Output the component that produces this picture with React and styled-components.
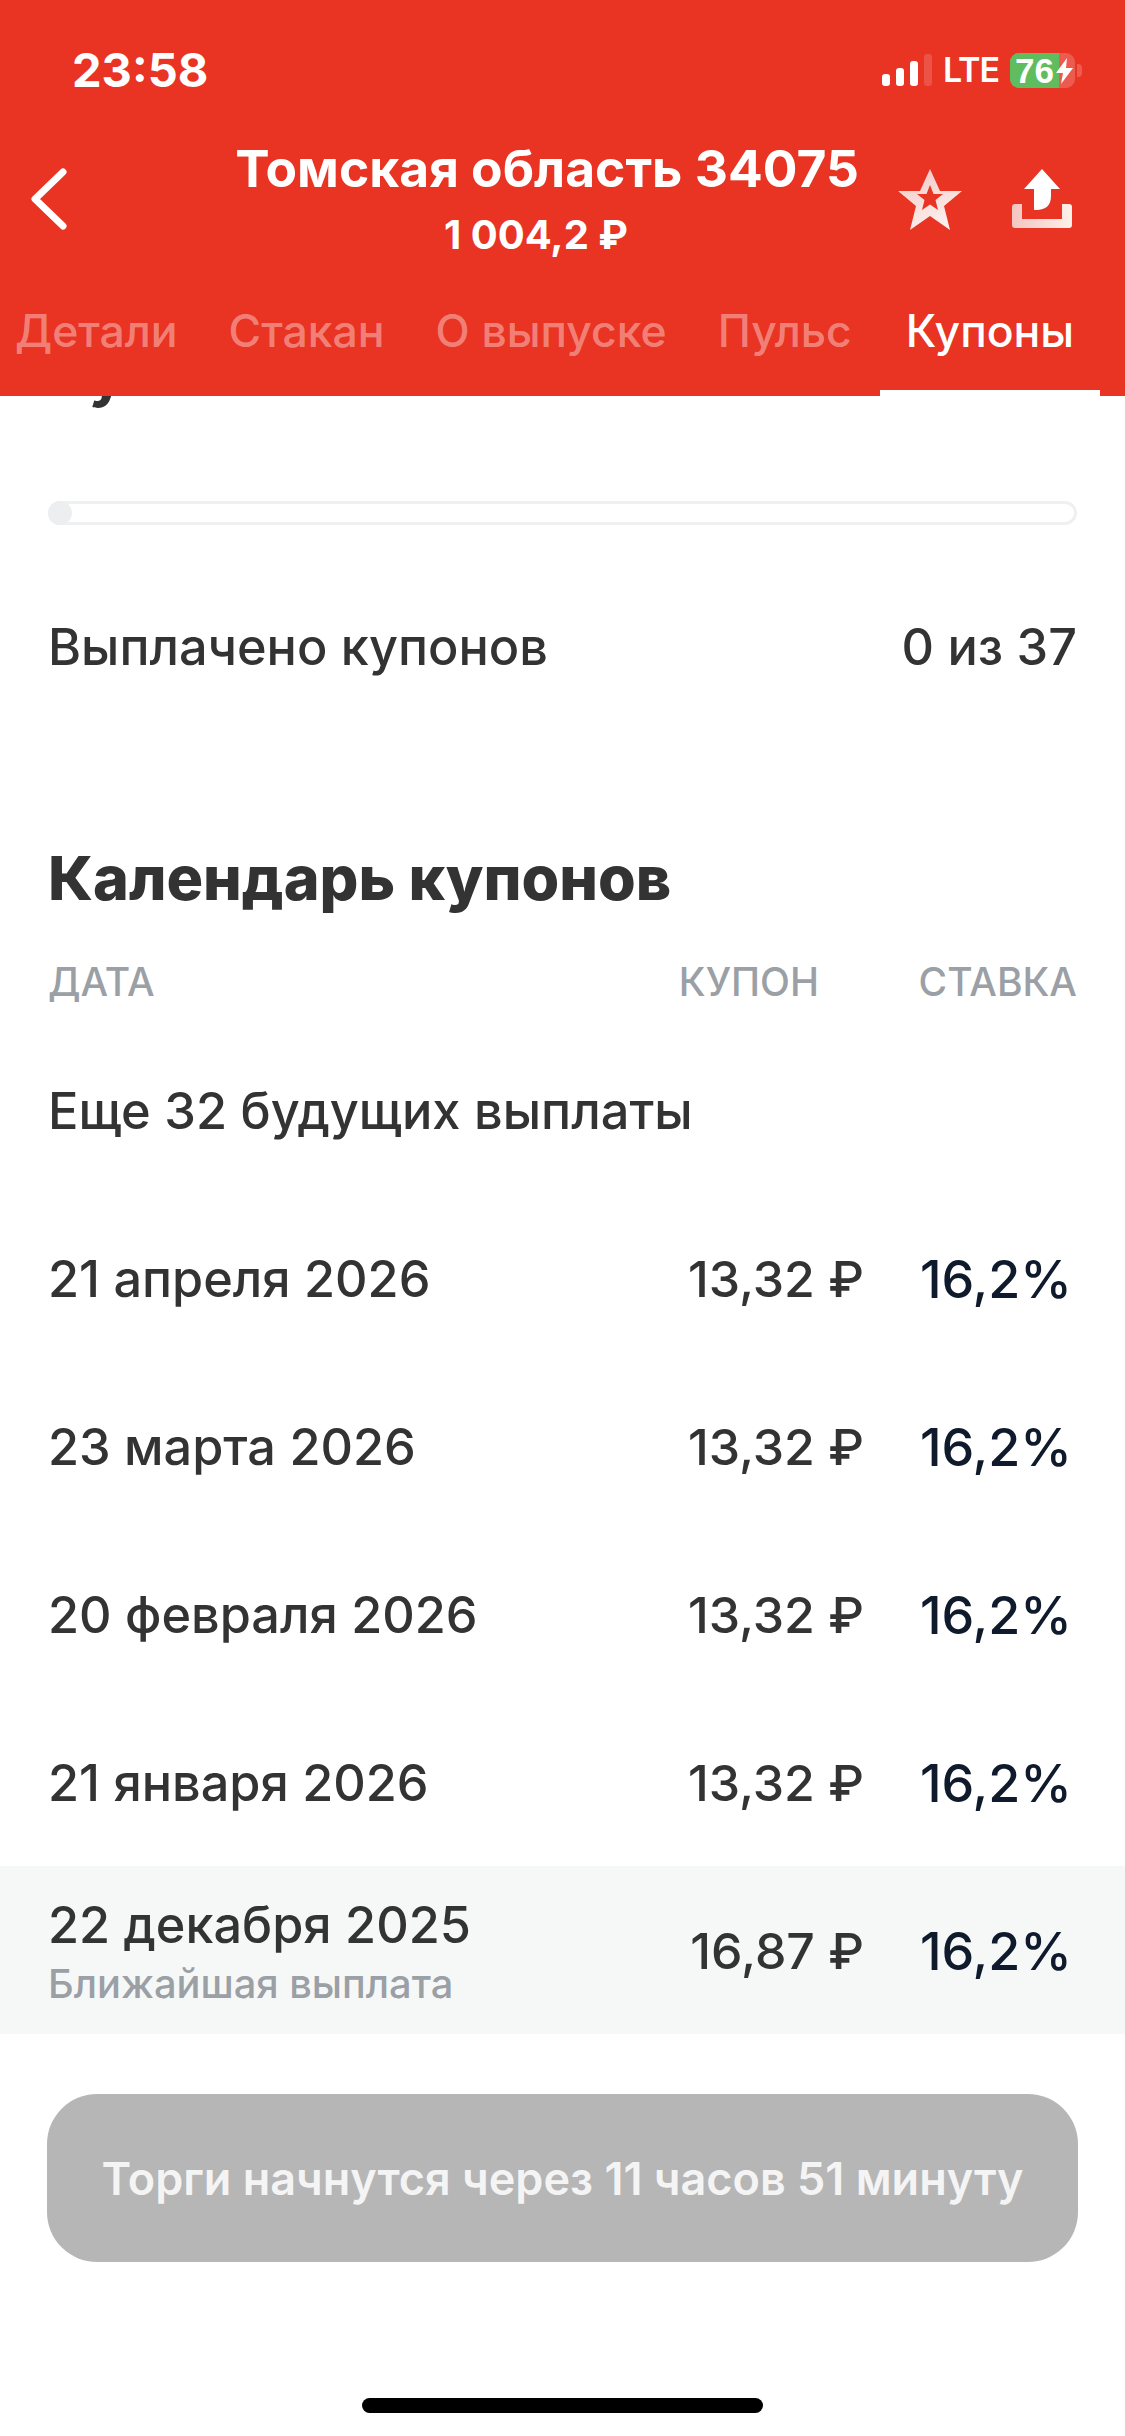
import React from 'react';
import styled, { createGlobalStyle } from 'styled-components';

const GlobalStyle = createGlobalStyle`
  html, body { margin: 0; padding: 0; background: #fff; }
  body { font-family: Inter, "Noto Sans", sans-serif; }
  * { box-sizing: border-box; }
`;

const Page = styled.div`
  width: 1125px;
  height: 2436px;
  display: flex;
  flex-direction: column;
  overflow: hidden;
  background: #fff;
`;

const Header = styled.header`
  height: 396px;
  background: #e93323;
  color: #fff;
  display: flex;
  flex-direction: column;
  flex-shrink: 0;
  position: relative;
`;

const StatusBar = styled.div`
  height: 132px;
  padding: 46px 43px 0 72px;
  display: flex;
  justify-content: space-between;
  align-items: flex-start;
`;

const Clock = styled.span`
  font-size: 47px;
  line-height: 48px;
  font-weight: 700;
`;

const StatusRight = styled.div`
  display: flex;
  align-items: center;
  gap: 11px;
  height: 48px;
`;

const Signal = styled.div`
  display: flex;
  align-items: flex-end;
  gap: 6px;
  height: 32px;
`;

const SignalBar = styled.span`
  width: 8px;
  height: ${p => p.$h}px;
  border-radius: 3px;
  background: ${p => (p.$off ? 'rgba(255,255,255,0.16)' : '#fff')};
`;

const Lte = styled.span`
  font-size: 34px;
  font-weight: 600;
  line-height: 36px;
  letter-spacing: -1px;
`;

const Battery = styled.div`
  position: relative;
  width: 65px;
  height: 35px;
  border-radius: 9px;
  background: rgba(255,255,255,0.2);
  font-family: "Liberation Sans", Arial, sans-serif;
  font-size: 35px;
  font-weight: 700;
  line-height: 35px;
  padding-left: 5px;
`;

const BatteryFill = styled.span`
  position: absolute;
  left: 0;
  top: 0;
  bottom: 0;
  width: ${p => p.$level}%;
  border-radius: 9px 0 0 9px;
  background: #5fbd5f;
`;

const BatteryText = styled.span`
  position: relative;
`;

const BatteryCap = styled.span`
  width: 5px;
  height: 13px;
  margin-left: -9px;
  border-radius: 0 4px 4px 0;
  background: rgba(255,255,255,0.2);
`;

const BoltSlot = styled.span`
  position: absolute;
  right: 2px;
  top: 5px;
  display: flex;
`;

const NavRow = styled.div`
  height: 134px;
  display: flex;
  align-items: center;
  padding: 0 53px 0 28px;
`;

const IconSlot = styled.div`
  display: flex;
  align-items: center;
  flex-shrink: 0;
`;

const TitleBlock = styled.div`
  flex: 1;
  text-align: center;
  padding-left: 128px;
`;

const Title = styled.div`
  font-size: 51.5px;
  line-height: 60px;
  font-weight: 700;
  white-space: nowrap;
`;

const Price = styled.div`
  margin-top: 12px;
  padding-right: 22px;
  font-size: 40px;
  line-height: 50px;
  font-weight: 700;
`;

const Actions = styled.div`
  display: flex;
  align-items: center;
  gap: 50px;
`;

const Tabs = styled.nav`
  flex: 1;
  display: flex;
  align-items: stretch;
  gap: 51px;
  padding: 0 0 0 15px;
`;

const Tab = styled.div`
  font-size: 44.5px;
  font-weight: 500;
  line-height: 50px;
  padding: 40px 0 0;
  margin-left: ${p => (p.$active ? '3px' : '0')};
  white-space: nowrap;
  color: ${p => (p.$active ? '#fff' : 'rgba(255,255,255,0.4)')};
  position: relative;
  &::after {
    content: '';
    display: ${p => (p.$active ? 'block' : 'none')};
    position: absolute;
    left: -26px;
    right: -26px;
    bottom: 0;
    height: 6px;
    background: #fff;
  }
`;

const Content = styled.main`
  flex: 1;
  display: flex;
  flex-direction: column;
  min-height: 0;
`;

const ClippedHeading = styled.div`
  height: 105px;
  padding-left: 48px;
  overflow: hidden;
  flex-shrink: 0;
`;

const ClippedText = styled.div`
  font-size: 60px;
  line-height: 60px;
  font-weight: 700;
  color: #333;
  margin-top: -53px;
`;

const Progress = styled.div`
  margin: 0 48px;
  height: 24px;
  box-shadow: inset 0 0 0 3px #eff1f1;
  border-radius: 12px;
  flex-shrink: 0;
`;

const ProgressFill = styled.div`
  width: 24px;
  height: 24px;
  background: #eceeef;
  border-radius: 50%;
`;

const PaidRow = styled.div`
  display: flex;
  justify-content: space-between;
  padding: 0 48px;
  margin-top: 94px;
  font-size: 50.4px;
  line-height: 56px;
  font-weight: 500;
  color: #333;
`;

const SectionTitle = styled.h2`
  margin: 171px 0 0;
  padding: 0 48px;
  font-size: 61px;
  line-height: 64px;
  font-weight: 800;
  color: #333;
`;

const ColumnsHead = styled.div`
  display: grid;
  grid-template-columns: 1fr 190px 258px;
  padding: 0 48px;
  margin-top: 49px;
  font-size: 39px;
  line-height: 46px;
  font-weight: 500;
  color: #9b9fa6;
`;

const HeadRight = styled.div`
  text-align: right;
`;

const MoreRow = styled.div`
  padding: 0 48px;
  margin-top: 78px;
  font-size: 50.5px;
  line-height: 56px;
  font-weight: 500;
  color: #333;
`;

const Rows = styled.div`
  margin-top: 55px;
`;

const Row = styled.div`
  height: 168px;
  display: grid;
  grid-template-columns: 1fr 222px 213px;
  align-items: center;
  padding: 2px 48px 0;
  background: ${p => (p.$near ? '#f6f8f7' : 'transparent')};
`;

const DateCol = styled.div`
  display: flex;
  flex-direction: column;
  padding-top: ${p => (p.$near ? '4px' : '0')};
`;

const DateText = styled.span`
  font-size: 50.4px;
  line-height: ${p => (p.$near ? '62px' : '58px')};
  font-weight: 500;
  color: #333;
`;

const NearText = styled.span`
  font-size: 39.8px;
  line-height: 56px;
  font-weight: 500;
  color: #9b9fa6;
`;

const Coupon = styled.div`
  font-size: 50px;
  font-weight: 500;
  color: #333;
  white-space: nowrap;
  text-align: right;
`;

const Rate = styled.div`
  font-size: 52px;
  font-weight: 500;
  color: #0f1a2c;
  text-align: right;
  padding-right: 5px;
`;

const TradeButton = styled.div`
  margin: 60px 47px 0;
  height: 168px;
  border-radius: 50px;
  background: #b6b6b6;
  color: #f4f4f4;
  display: flex;
  align-items: center;
  justify-content: center;
  font-size: 45px;
  font-weight: 600;
`;

const HomeSlot = styled.div`
  margin-top: 136px;
  display: flex;
  justify-content: center;
`;

const HomeBar = styled.div`
  width: 401px;
  height: 15px;
  border-radius: 8px;
  background: #000;
`;

const BackIcon = () => (
  <svg width="40" height="64" viewBox="0 0 40 64">
    <path d="M35 5 L7 32 L35 59" fill="none" stroke="#fff" strokeWidth="7" strokeLinecap="round" strokeLinejoin="round" />
  </svg>
);

const StarIcon = () => (
  <svg width="64" height="61" viewBox="0 0 64 61">
    <defs>
      <linearGradient id="starFill" x1="0" y1="0" x2="0.4" y2="1">
        <stop offset="0" stopColor="#f3c6c2" />
        <stop offset="1" stopColor="#fbeeec" />
      </linearGradient>
    </defs>
    <path
      fillRule="evenodd"
      d="M32 0 L42 22 L64 22 L46 37 L52 61 L32 47 L12 61 L18 37 L0 22 L22 22 Z M32 16 L28.5 25 L19 25 L26.5 31 L24 41 L32 35.5 L40 41 L37.5 31 L45 25 L35.5 25 Z"
      fill="url(#starFill)"
    />
  </svg>
);

const ShareIcon = () => (
  <svg width="60" height="60" viewBox="0 0 60 60">
    <defs>
      <linearGradient id="trayFill" x1="0" y1="0" x2="1" y2="0">
        <stop offset="0" stopColor="#f4c5c1" />
        <stop offset="1" stopColor="#fdf0e8" />
      </linearGradient>
    </defs>
    <path d="M30 0 L48 20 L39 20 L39 27 C39 36 34 41 24 41 L22 41 L22 20 L12 20 Z" fill="#fff" />
    <path d="M0 38 Q0 35 3 35 L10 35 L10 50 L50 50 L50 35 L57 35 Q60 35 60 38 L60 56 Q60 59 57 59 L3 59 Q0 59 0 56 Z" fill="url(#trayFill)" />
  </svg>
);

const BoltIcon = () => (
  <svg width="17" height="26" viewBox="0 0 17 26">
    <path d="M11 0 L0 15 L7 15 L5 26 L17 10 L10 10 Z" fill="#fff" />
  </svg>
);

const rows = [
  ['21 апреля 2026', '13,32 ₽'],
  ['23 марта 2026', '13,32 ₽'],
  ['20 февраля 2026', '13,32 ₽'],
  ['21 января 2026', '13,32 ₽'],
];

export default function App() {
  return (
    <Page>
      <GlobalStyle />
      <Header>
        <StatusBar>
          <Clock>23:58</Clock>
          <StatusRight>
            <Signal>
              <SignalBar $h={12} />
              <SignalBar $h={18} />
              <SignalBar $h={25} />
              <SignalBar $h={32} $off />
            </Signal>
            <Lte>LTE</Lte>
            <Battery>
              <BatteryFill $level={76} />
              <BatteryText>76</BatteryText>
              <BoltSlot><BoltIcon /></BoltSlot>
            </Battery>
            <BatteryCap />
          </StatusRight>
        </StatusBar>
        <NavRow>
          <IconSlot><BackIcon /></IconSlot>
          <TitleBlock>
            <Title>Томская область 34075</Title>
            <Price>1 004,2 ₽</Price>
          </TitleBlock>
          <Actions>
            <IconSlot><StarIcon /></IconSlot>
            <IconSlot><ShareIcon /></IconSlot>
          </Actions>
        </NavRow>
        <Tabs>
          <Tab>Детали</Tab>
          <Tab>Стакан</Tab>
          <Tab>О выпуске</Tab>
          <Tab>Пульс</Tab>
          <Tab $active>Купоны</Tab>
        </Tabs>
      </Header>
      <Content>
        <ClippedHeading><ClippedText>Купоны</ClippedText></ClippedHeading>
        <Progress><ProgressFill /></Progress>
        <PaidRow><span>Выплачено купонов</span><span>0 из 37</span></PaidRow>
        <SectionTitle>Календарь купонов</SectionTitle>
        <ColumnsHead>
          <span>ДАТА</span>
          <HeadRight>КУПОН</HeadRight>
          <HeadRight>СТАВКА</HeadRight>
        </ColumnsHead>
        <MoreRow>Еще 32 будущих выплаты</MoreRow>
        <Rows>
          {rows.map(([d, c]) => (
            <Row key={d}>
              <DateCol><DateText>{d}</DateText></DateCol>
              <Coupon>{c}</Coupon>
              <Rate>16,2%</Rate>
            </Row>
          ))}
          <Row $near>
            <DateCol $near>
              <DateText $near>22 декабря 2025</DateText>
              <NearText>Ближайшая выплата</NearText>
            </DateCol>
            <Coupon>16,87 ₽</Coupon>
            <Rate>16,2%</Rate>
          </Row>
        </Rows>
        <TradeButton>Торги начнутся через 11 часов 51 минуту</TradeButton>
        <HomeSlot><HomeBar /></HomeSlot>
      </Content>
    </Page>
  );
}
